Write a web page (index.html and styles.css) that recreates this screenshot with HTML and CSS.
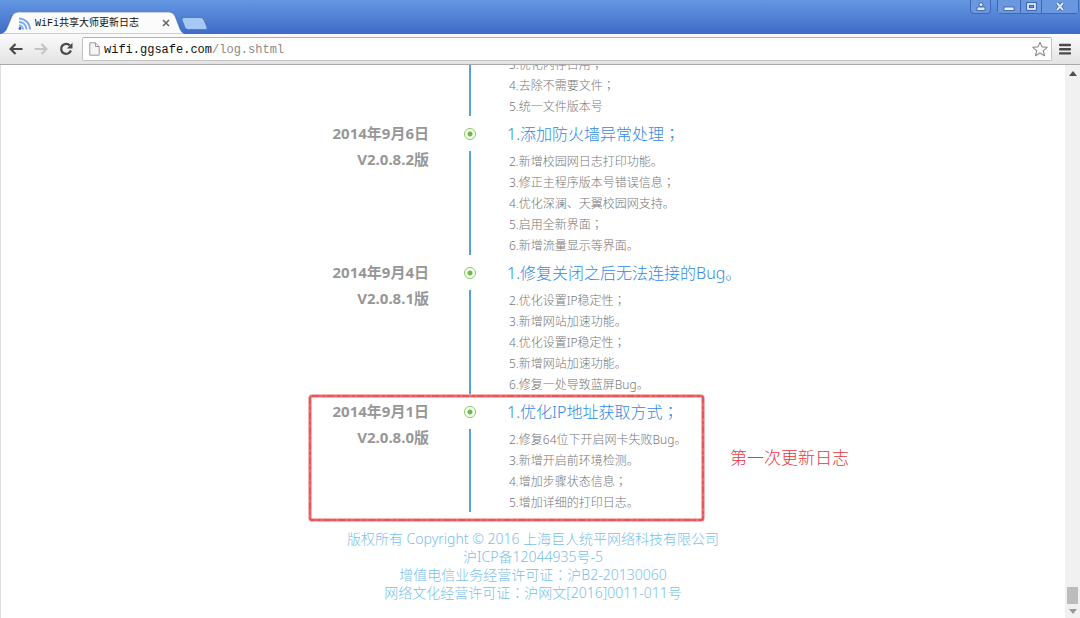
FILE: index.html
```html
<!DOCTYPE html>
<html lang="zh-CN">
<head>
<meta charset="utf-8">
<title>WiFi共享大师更新日志</title>
<link rel="stylesheet" href="styles.css">
</head>
<body>
<div class="browser">
  <header class="tabstrip">
    <div class="tab">
      <svg class="tab-shape" viewBox="0 0 186 22" preserveAspectRatio="none" aria-hidden="true">
        <path d="M0 22 C4 21 6 19 7 16 L12 4 Q14 0 18 0 H169 Q173 0 175 4 L180 17 C182 21 183 21 186 22 Z" fill="#fbfbfc" stroke="#3862ae" stroke-width="0.6"/>
      </svg>
      <svg class="favicon" viewBox="0 0 13 13" aria-hidden="true">
        <g fill="none" stroke="#7da9ee" stroke-width="1.9">
          <path d="M1 8.5 A4 4 0 0 1 5 12.5"/><path d="M1 5 A7.5 7.5 0 0 1 8.5 12.5"/><path d="M1 1.5 A11 11 0 0 1 12 12.5"/>
        </g>
        <circle cx="2" cy="11.5" r="1.4" fill="#356bc5"/>
      </svg>
      <span class="tab-title">WiFi共享大师更新日志</span>
      <button class="tab-close" aria-label="关闭标签页">
        <svg viewBox="0 0 8 8" width="8" height="8"><path d="M1 1 L7 7 M7 1 L1 7" stroke="#666" stroke-width="1.6"/></svg>
      </button>
    </div>
    <button class="new-tab" aria-label="新标签页">
      <svg viewBox="0 0 27 13" width="27" height="13"><path d="M3 .5 H20 Q22 .5 23 3 L26 10.500 Q26.500 12.500 24 12.500 H7 Q5 12.500 4 10.500 L1 3 Q.5 .5 3 .5Z" fill="#a5c8f5" stroke="#426eb8" stroke-width=".7"/></svg>
    </button>
    <div class="window-controls">
      <button class="control user" aria-label="用户">
        <svg viewBox="0 0 10 9" width="10" height="9"><path d="M1 8.500 V6 Q1 5 2.500 5 H7.500 Q9 5 9 6 V8.500Z" fill="#dce8fb" stroke="#34579c" stroke-width=".8"/><circle cx="5" cy="2.700" r="2" fill="#dce8fb" stroke="#34579c" stroke-width=".8"/></svg>
      </button>
      <div class="control-group">
        <button class="control minimize" aria-label="最小化">
          <svg viewBox="0 0 12 9" width="12" height="9"><rect x="1" y="5" width="10" height="3.500" fill="#e8f0fd" stroke="#34579c" stroke-width=".8"/></svg>
        </button>
        <button class="control maximize" aria-label="最大化">
          <svg viewBox="0 0 11 9" width="11" height="9"><rect x="2" y="2" width="7" height="5" fill="none" stroke="#34579c" stroke-width="3.500"/><rect x="2" y="2" width="7" height="5" fill="none" stroke="#dfeafc" stroke-width="1.800"/></svg>
        </button>
        <button class="control close" aria-label="关闭">
          <svg viewBox="0 0 10 9" width="10" height="9"><path d="M2 1 L8 8 M8 1 L2 8" stroke="#34579c" stroke-width="3.400"/><path d="M2 1 L8 8 M8 1 L2 8" stroke="#dfeafc" stroke-width="2"/></svg>
        </button>
      </div>
    </div>
  </header>

  <nav class="toolbar" aria-label="导航">
    <button class="nav-button" aria-label="后退">
      <svg viewBox="0 0 14 12" width="14" height="12"><path d="M6.500 1 L1.600 6 L6.500 11 M2 6 H13.500" fill="none" stroke="#4a4a4a" stroke-width="2.200"/></svg>
    </button>
    <button class="nav-button" aria-label="前进">
      <svg viewBox="0 0 14 12" width="14" height="12"><path d="M7.500 1 L12.400 6 L7.500 11 M12 6 H.5" fill="none" stroke="#c5c5c5" stroke-width="2.200"/></svg>
    </button>
    <button class="nav-button" aria-label="重新加载">
      <svg viewBox="0 0 14 14" width="14" height="14"><path d="M10.800 3.400 A5 5 0 1 0 11.900 8.500" fill="none" stroke="#4a4a4a" stroke-width="2.300"/><path d="M13.500 .8 V6.400 H7.900Z" fill="#4a4a4a"/></svg>
    </button>
    <div class="omnibox">
      <svg viewBox="0 0 11 14" width="11" height="14" aria-hidden="true"><path d="M.8 .8 H6.500 L10.200 4.500 V13.200 H.8Z M6.500 .8 V4.500 H10.200" fill="#f5f5f5" stroke="#999" stroke-width="1"/></svg>
      <a class="address" href="#log"><span class="host">wifi.ggsafe.com</span>/log.shtml</a>
      <button class="bookmark" aria-label="添加书签">
        <svg viewBox="0 0 16 16" width="16" height="16"><path d="M8 1.200 L10 5.900 L15.200 6.300 L11.300 9.700 L12.500 14.700 L8 12 L3.500 14.700 L4.700 9.700 L.8 6.300 L6 5.900Z" fill="#fff" stroke="#8d8d8d" stroke-width="1.100" stroke-linejoin="round"/></svg>
      </button>
    </div>
    <button class="menu" aria-label="菜单">
      <svg viewBox="0 0 12 12" width="12" height="12"><path d="M1 2 H11 M1 6.200 H11 M1 10.400 H11" stroke="#4a4a4a" stroke-width="2.400" stroke-linecap="round"/></svg>
    </button>
  </nav>

  <div class="viewport">
    <main class="page" id="log">
      <div class="timeline">
        <article class="entry entry-partial">
          <div class="version"></div>
          <div class="axis"><i class="line"></i></div>
          <div class="changes">
            <ul><li>3.优化内存占用<span class="mid" lang="zh-TW">；</span></li><li>4.去除不需要文件<span class="mid" lang="zh-TW">；</span></li><li>5.统一文件版本号</li></ul>
          </div>
        </article>
        <article class="entry">
          <div class="version"><time datetime="2014-09-06">2014年9月6日</time><span>V2.0.8.2版</span></div>
          <div class="axis"><i class="dot"></i><i class="line"></i></div>
          <div class="changes">
            <h2>1.添加防火墙异常处理<span class="mid" lang="zh-TW">；</span></h2>
            <ul><li>2.新增校园网日志打印功能。</li><li>3.修正主程序版本号错误信息<span class="mid" lang="zh-TW">；</span></li><li>4.优化深澜、天翼校园网支持。</li><li>5.启用全新界面<span class="mid" lang="zh-TW">；</span></li><li>6.新增流量显示等界面。</li></ul>
          </div>
        </article>
        <article class="entry">
          <div class="version"><time datetime="2014-09-04">2014年9月4日</time><span>V2.0.8.1版</span></div>
          <div class="axis"><i class="dot"></i><i class="line"></i></div>
          <div class="changes">
            <h2>1.修复关闭之后无法连接的Bug。</h2>
            <ul><li>2.优化设置IP稳定性<span class="mid" lang="zh-TW">；</span></li><li>3.新增网站加速功能。</li><li>4.优化设置IP稳定性<span class="mid" lang="zh-TW">；</span></li><li>5.新增网站加速功能。</li><li>6.修复一处导致蓝屏Bug。</li></ul>
          </div>
        </article>
        <article class="entry">
          <div class="version"><time datetime="2014-09-01">2014年9月1日</time><span>V2.0.8.0版</span></div>
          <div class="axis"><i class="dot"></i><i class="line"></i></div>
          <div class="changes">
            <h2>1.优化IP地址获取方式<span class="mid" lang="zh-TW">；</span></h2>
            <ul><li>2.修复64位下开启网卡失败Bug。</li><li>3.新增开启前环境检测。</li><li>4.增加步骤状态信息<span class="mid" lang="zh-TW">；</span></li><li>5.增加详细的打印日志。</li></ul>
          </div>
          <div class="highlight">
            <svg width="100%" height="100%" aria-hidden="true">
              <rect class="stroke-base" x="2" y="2" rx="2"/>
              <rect class="stroke-grain" x="2" y="2" rx="2"/>
            </svg>
            <p class="note">第一次更新日志</p>
          </div>
        </article>
      </div>
      <footer class="footer">
        <p>版权所有 Copyright © 2016 上海巨人统平网络科技有限公司</p>
        <p>沪ICP备12044935号-5</p>
        <p>增值电信业务经营许可证<span class="mid" lang="zh-TW">：</span>沪B2-20130060</p>
        <p>网络文化经营许可证<span class="mid" lang="zh-TW">：</span>沪网文[2016]0011-011号</p>
      </footer>
    </main>
    <div class="scrollbar" aria-hidden="true">
      <svg viewBox="0 0 8 5" width="8" height="5"><path d="M0 5 L4 0 L8 5Z" fill="#505050"/></svg>
      <span class="thumb"></span>
      <svg viewBox="0 0 8 5" width="8" height="5"><path d="M0 0 L4 5 L8 0Z" fill="#999"/></svg>
    </div>
  </div>
</div>
</body>
</html>
```
FILE: styles.css
```css
* { box-sizing: border-box; }
body, h2, ul, p { margin: 0; padding: 0; }
body { font-family: "Noto Sans", "Noto Sans CJK SC", sans-serif; background: #fff; }
button { padding: 0; border: 0; background: none; display: flex; align-items: center; justify-content: center; }
svg { display: block; }
.browser { display: flex; flex-direction: column; height: 100vh; overflow: hidden; }

.tabstrip { display: flex; align-items: flex-end; height: 34px; flex: none; background: linear-gradient(#6497e2, #3f6bc6); }
.tab { position: relative; display: flex; align-items: center; width: 186px; height: 22px; padding: 0 12px 0 18px; }
.tab-shape { position: absolute; inset: 0; width: 100%; height: 100%; }
.favicon { position: relative; width: 13px; height: 13px; margin-right: 4px; }
.tab-title { position: relative; flex: 1; padding-top: 2px; font: 10px/16px "Liberation Mono", "Noto Sans CJK SC", monospace; color: #111; white-space: nowrap; }
.tab-close { position: relative; width: 16px; height: 16px; }
.new-tab { align-self: center; margin-top: 13px; margin-left: -5px; }
.window-controls { display: flex; align-self: flex-start; gap: 6px; margin-left: auto; padding-right: 1px; }
.control-group { display: flex; border: 1px solid #3e68b4; border-top: 0; border-radius: 0 0 4px 4px; }
.control { width: 22px; height: 13px; background: #6a98df; }
.control.user { width: 21px; height: 14px; border: 1px solid #3e68b4; border-top: 0; border-radius: 0 0 4px 4px; }
.control.maximize { border: solid #3e68b4; border-width: 0 1px; }
.control.close { width: 36px; }

.toolbar { display: flex; align-items: center; gap: 3px; height: 31px; flex: none; padding: 0 5px; background: linear-gradient(#fbfbfc, #e3e3e4); border-bottom: 1px solid #aaa; }
.nav-button { width: 22px; height: 24px; }
.omnibox { display: flex; align-items: center; flex: 1; height: 24px; margin-left: 2px; padding: 0 3px 0 6px; background: #fff; border: 1px solid #c4c4c4; border-top-color: #bda9c2; border-radius: 2px; }
.address { flex: 1; margin-left: 4px; padding-top: 2px; font: 12px/20px "Liberation Mono", monospace; color: #8a8a8a; text-decoration: none; }
.host { color: #111; }
.bookmark { width: 16px; height: 20px; }
.menu { width: 20px; height: 24px; }

.viewport { display: flex; flex: 1; min-height: 0; }
.page { flex: 1; overflow: hidden; border-left: 1px solid #ddd; }
.timeline { width: 450px; margin: 0 auto; }
.entry { position: relative; display: grid; grid-template-columns: 121px 81px 1fr; }
.entry-partial { margin-top: -11px; }
.version { display: flex; flex-direction: column; padding-top: 3px; font-size: 15px; line-height: 26px; font-weight: 700; color: #979797; text-align: right; }
.axis { display: flex; flex-direction: column; align-items: center; }
.dot { display: flex; flex: none; width: 12px; height: 12px; margin: 11px 0; border: 1px solid #7fcf58; border-radius: 50%; background: radial-gradient(circle, #66bd40 0 2px, #fff 3px); }
.line { flex: 1; width: 2px; margin-bottom: 1px; background: #55a2d9; }
.changes { margin-left: -3px; white-space: nowrap; font-weight: 300; }
.mid { font-family: "Noto Sans", "Noto Sans CJK TC", sans-serif; line-height: 1; }
h2 { font-size: 16px; line-height: 34px; font-weight: 300; color: #3289e4; }
ul { list-style: none; padding-left: 2px; font-size: 12px; line-height: 21px; color: #777; }
.highlight { position: absolute; top: -1px; left: 0; width: 397px; bottom: -9px; }
.highlight rect { width: calc(100% - 4px); height: calc(100% - 4px); fill: none; }
.stroke-base { stroke: #ee6b70; stroke-width: 3px; }
.stroke-grain { stroke: #d9434b; stroke-width: 1px; stroke-dasharray: 7 3 3 2; }
.note { position: absolute; left: 100%; top: 50%; margin-left: 25px; font-size: 17px; line-height: 26px; margin-top: -13px; white-space: nowrap; font-weight: 300; color: #e8363e; }
.footer { margin-top: 17px; font-size: 14px; line-height: 18px; font-weight: 300; color: #78bfea; text-align: center; }

.scrollbar { display: flex; flex-direction: column; align-items: center; width: 15px; padding: 6px 0 4px; background: #f1f1f1; }
.thumb { width: 11px; height: 17px; margin-top: auto; margin-bottom: 5px; background: #bcbcbc; }
```
